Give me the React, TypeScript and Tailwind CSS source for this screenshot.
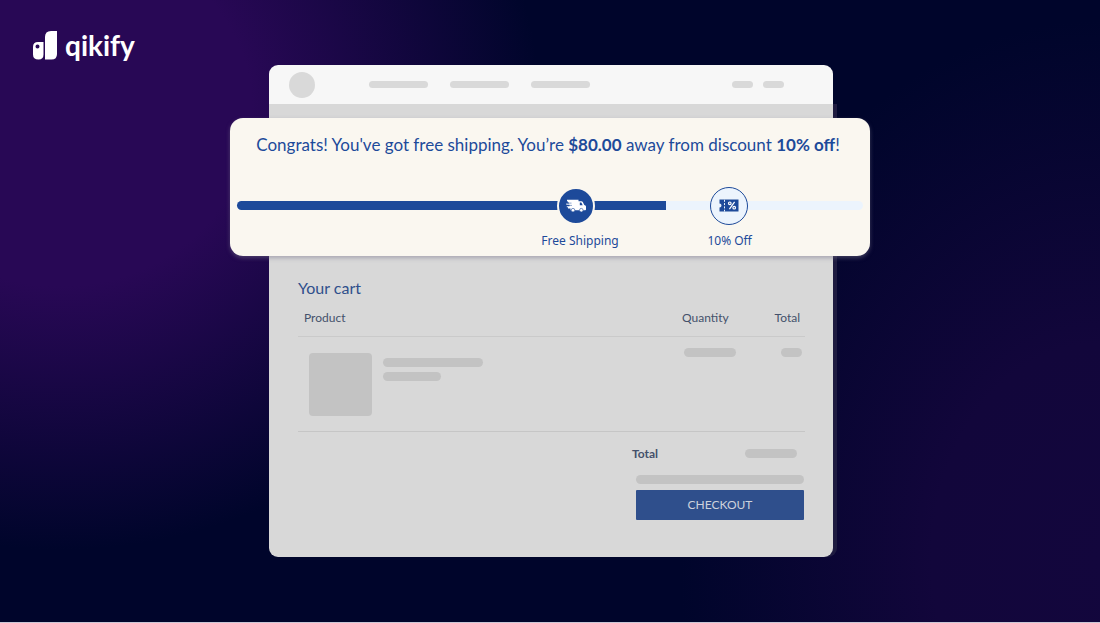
import clsx from 'clsx'

interface Milestone {
  label: string
  at: number
  labelAt: number
  reached: boolean
}

const PROGRESS = 69

const milestones: Milestone[] = [
  { label: 'Free Shipping', at: 54.2, labelAt: 54.8, reached: true },
  { label: '10% Off', at: 78.6, labelAt: 78.7, reached: false },
]

function Logo() {
  return (
    <a href="#" className="flex items-center gap-2 text-white">
      <svg width="24" height="29" viewBox="0 0 24 29" fill="currentColor" aria-hidden="true">
        <path d="M18 0H24V23Q24 28.500 18.500 28.500H12V6Q12 0 18 0Z" />
        <path
          fillRule="evenodd"
          d="M5 11H10.500V23.500Q10.500 28.500 5.500 28.500Q0 28.500 0 23.500V16Q0 11 5 11ZM4.500 13.500A2 2 0 1 0 4.500 17.500A2 2 0 1 0 4.500 13.500Z"
        />
      </svg>
      <span className="text-[28px] leading-8 font-bold [font-variant-ligatures:none]">qikify</span>
    </a>
  )
}

function TruckIcon() {
  return (
    <svg width="20" height="14" viewBox="0 0 20 14" className="shrink-0" aria-hidden="true">
      <path
        fill="#fff"
        d="M1 0.800H12.500V2.200H15.500Q16.300 2.200 16.800 3L18.300 6L19.400 6.600Q20 7 20 7.800V10.600Q20 11.300 19.200 11.300H4.500V9.600H2V8.300H0.800V7.200H3.500V5.800H0.300V4.600H3V3.400H1.800V2.200H1Z"
      />
      <path fill="#1d4a9a" d="M13.800 3.500H15.300L16.700 6.200H13.800Z" />
      <path stroke="#1d4a9a" strokeWidth="0.500" d="M1 4.100H5.500M1 6.400H6" />
      <g fill="#fff" stroke="#1d4a9a" strokeWidth="0.600">
        <circle cx="7" cy="11.200" r="1.800" />
        <circle cx="15.300" cy="11.200" r="1.800" />
      </g>
    </svg>
  )
}

function TicketIcon() {
  return (
    <svg width="20" height="13" viewBox="0 0 20 13" aria-hidden="true">
      <path fill="#1d4a9a" d="M0.500 0.500H19.500V12.500H0.500V8.500Q2.500 8.500 2.500 6.500Q2.500 4.500 0.500 4.500Z" />
      <path stroke="#ecf4fd" strokeWidth="1" strokeDasharray="2 1.300" d="M5.500 0.800V12.500" />
      <g fill="none" stroke="#fff" strokeWidth="1.200">
        <circle cx="10.800" cy="4.300" r="1.300" />
        <circle cx="15.200" cy="8.700" r="1.300" />
        <path d="M15.600 2.800L10.400 10.200" />
      </g>
    </svg>
  )
}

function RewardBanner() {
  return (
    <section className="relative -ml-[39px] -mr-[37px] rounded-[13px] bg-[#faf7f0] px-[7px] pt-[15px] pb-[46px] text-[#1d4a9a] shadow-[0_2px_4px_rgba(120,115,140,0.5)]">
      <p className="pr-1 text-center text-[17px] leading-6">
        Congrats! You've got free shipping. You’re <b className="font-bold">$80.00</b> away from discount{' '}
        <b className="font-bold">10% off</b>!
      </p>
      <div
        role="progressbar"
        aria-label="Reward progress"
        aria-valuenow={PROGRESS}
        className="relative mt-11 h-[9px] rounded-full bg-[#ecf4fd]"
      >
        <div className="h-full rounded-l-full bg-[#1d4a9a]" style={{ width: `${PROGRESS - 0.4}%` }} />
        {milestones.map((m) => (
          <div key={m.label}>
            <div
              className={clsx(
                'absolute top-1/2 flex size-[38px] -translate-x-1/2 -translate-y-1/2 items-center justify-center rounded-full',
                m.reached ? 'border-2 border-[#faf7f0] bg-[#1d4a9a]' : 'border border-[#1d4a9a] bg-[#ecf4fd]',
              )}
              style={{ left: `${m.at}%` }}
            >
              {m.reached ? <TruckIcon /> : <TicketIcon />}
            </div>
            <span
              className="absolute top-8 -translate-x-1/2 font-['Noto_Sans',sans-serif] text-[12px] leading-4 whitespace-nowrap"
              style={{ left: `${m.labelAt}%` }}
            >
              {m.label}
            </span>
          </div>
        ))}
      </div>
    </section>
  )
}

function Bar({ className }: { className: string }) {
  return <div className={clsx('h-[9px] rounded-full bg-[#c3c3c3]', className)} />
}

function StoreHeader() {
  return (
    <header className="flex h-[39px] items-center rounded-t-[9px] bg-[#f7f7f7] pr-[49px] pl-5">
      <div className="size-[26px] rounded-full bg-[#d9d9d9]" />
      <div className="ml-[54px] flex gap-[22px]">
        <div className="h-[7px] w-[59px] rounded-full bg-[#d9d9d9]" />
        <div className="h-[7px] w-[59px] rounded-full bg-[#d9d9d9]" />
        <div className="h-[7px] w-[59px] rounded-full bg-[#d9d9d9]" />
      </div>
      <div className="ml-auto flex gap-[10px]">
        <div className="h-[7px] w-[21px] rounded-full bg-[#d9d9d9]" />
        <div className="h-[7px] w-[21px] rounded-full bg-[#d9d9d9]" />
      </div>
    </header>
  )
}

function Cart() {
  return (
    <section className="pt-5 pr-7 pb-[37px] pl-[29px] text-[12px] leading-4 text-[#44516b]">
      <h1 className="text-[16px] leading-6 text-[#2f4f8c]">Your cart</h1>
      <table className="w-full">
        <thead>
          <tr className="h-9 border-b border-[#cacaca]">
            <th className="pl-[6px] text-left font-normal">Product</th>
            <th className="w-[84px] text-left font-normal">Quantity</th>
            <th className="w-[39px] pr-[5px] text-right font-normal">Total</th>
          </tr>
        </thead>
        <tbody>
          <tr className="h-[95px] border-b border-[#c6c6c6] align-top">
            <td className="pt-4 pl-[11px]">
              <div className="flex gap-[11px]">
                <div className="size-[63px] rounded bg-[#c3c3c3]" />
                <div className="flex flex-col gap-[5px] pt-[5px]">
                  <Bar className="w-[100px]" />
                  <Bar className="w-[58px]" />
                </div>
              </div>
            </td>
            <td className="pt-[11px] pl-[2px]">
              <Bar className="w-[52px]" />
            </td>
            <td className="pt-[11px] pr-[3px]">
              <Bar className="ml-auto w-[21px]" />
            </td>
          </tr>
        </tbody>
      </table>
      <div className="mr-px ml-auto w-[172px] pt-[14px]">
        <div className="flex items-center justify-between pr-[7px]">
          <span className="font-bold">Total</span>
          <Bar className="w-[52px]" />
        </div>
        <Bar className="mt-[13px] ml-1" />
        <div className="mt-[6px] pl-1">
          <button type="button" className="h-[30px] w-full rounded-[1px] bg-[#2f4f8c] text-[#cdd2dc]">
            CHECKOUT
          </button>
        </div>
      </div>
    </section>
  )
}

export default function App() {
  return (
    <div className="min-h-screen border-b border-[#cbc8d6] bg-[#00052b] bg-[radial-gradient(ellipse_480px_440px_at_60px_110px,#280855_0%,#280855_40%,rgba(40,8,85,0)_100%),radial-gradient(ellipse_420px_540px_at_100%_90%,#13063d_0%,#12063b_40%,rgba(18,6,59,0)_100%)] font-['Lato',sans-serif]">
      <div className="flex h-[65px] items-start pt-[29px] pl-[33px]">
        <Logo />
      </div>
      <main className="pb-8 pl-[2px]">
        <div className="mx-auto w-full max-w-[564px]">
          <StoreHeader />
          <div className="rounded-b-[9px] bg-[#d8d8d8] pt-[14px] shadow-[4px_0_0_#1e1b40]">
            <RewardBanner />
            <Cart />
          </div>
        </div>
      </main>
    </div>
  )
}
